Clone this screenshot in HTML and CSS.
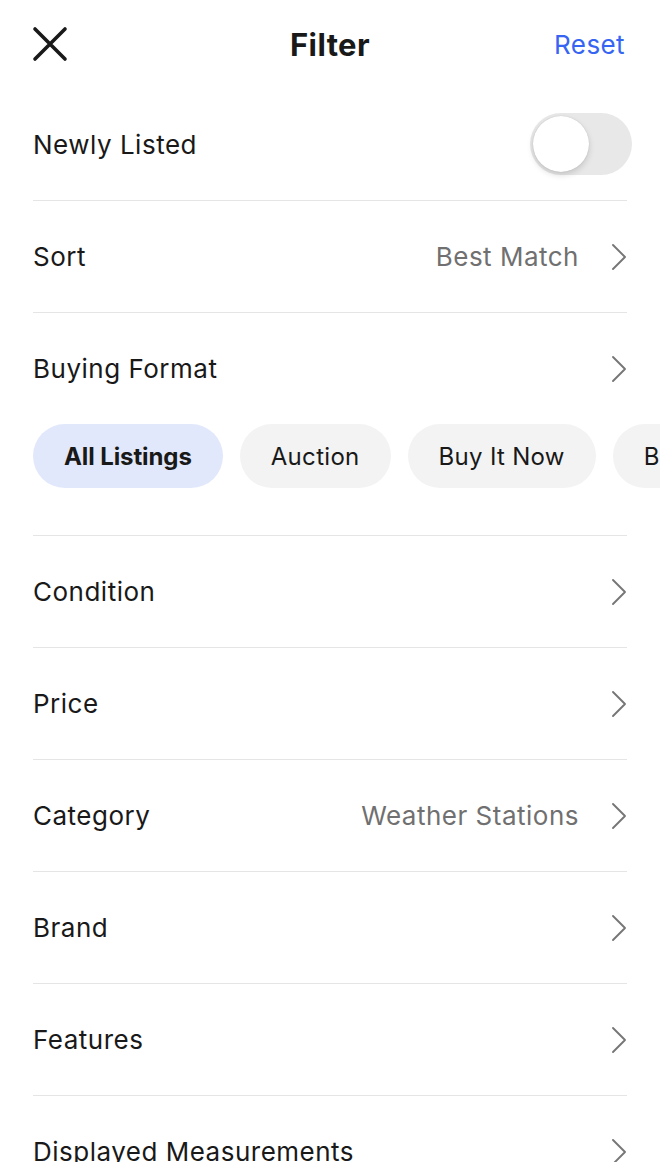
FILE: index.html
```html
<!DOCTYPE html>
<html>
<head>
<meta charset="utf-8">
<link rel="stylesheet" href="styles.css">
</head>
<body>
<div class="screen">
  <header class="top">
    <span class="close"><svg width="36" height="36" viewBox="0 0 36 36"><path d="M3 3 L33 33 M33 3 L3 33" stroke="#191919" stroke-width="3.6" stroke-linecap="round" fill="none"/></svg></span>
    <h1 class="title">Filter</h1>
    <span class="reset">Reset</span>
  </header>
  <div class="list">
    <div class="row">
      <span class="label">Newly Listed</span>
      <span class="toggle"><span class="knob"></span></span>
    </div>
    <div class="row sep">
      <span class="label">Sort</span>
      <span class="value">Best Match</span>
      <span class="chev"><svg width="16" height="28" viewBox="0 0 16 28"><path d="M2 2 L14 14 L2 26" stroke="#767676" stroke-width="1.9" fill="none" stroke-linecap="round" stroke-linejoin="round"/></svg></span>
    </div>
    <div class="group">
      <div class="row sep">
        <span class="label">Buying Format</span>
        <span class="chev"><svg width="16" height="28" viewBox="0 0 16 28"><path d="M2 2 L14 14 L2 26" stroke="#767676" stroke-width="1.9" fill="none" stroke-linecap="round" stroke-linejoin="round"/></svg></span>
      </div>
      <div class="chips">
        <span class="chip active">All Listings</span>
        <span class="chip">Auction</span>
        <span class="chip">Buy It Now</span>
        <span class="chip">Best Offer</span>
      </div>
    </div>
    <div class="row sep">
      <span class="label">Condition</span>
      <span class="chev"><svg width="16" height="28" viewBox="0 0 16 28"><path d="M2 2 L14 14 L2 26" stroke="#767676" stroke-width="1.9" fill="none" stroke-linecap="round" stroke-linejoin="round"/></svg></span>
    </div>
    <div class="row sep">
      <span class="label">Price</span>
      <span class="chev"><svg width="16" height="28" viewBox="0 0 16 28"><path d="M2 2 L14 14 L2 26" stroke="#767676" stroke-width="1.9" fill="none" stroke-linecap="round" stroke-linejoin="round"/></svg></span>
    </div>
    <div class="row sep">
      <span class="label">Category</span>
      <span class="value">Weather Stations</span>
      <span class="chev"><svg width="16" height="28" viewBox="0 0 16 28"><path d="M2 2 L14 14 L2 26" stroke="#767676" stroke-width="1.9" fill="none" stroke-linecap="round" stroke-linejoin="round"/></svg></span>
    </div>
    <div class="row sep">
      <span class="label">Brand</span>
      <span class="chev"><svg width="16" height="28" viewBox="0 0 16 28"><path d="M2 2 L14 14 L2 26" stroke="#767676" stroke-width="1.9" fill="none" stroke-linecap="round" stroke-linejoin="round"/></svg></span>
    </div>
    <div class="row sep">
      <span class="label">Features</span>
      <span class="chev"><svg width="16" height="28" viewBox="0 0 16 28"><path d="M2 2 L14 14 L2 26" stroke="#767676" stroke-width="1.9" fill="none" stroke-linecap="round" stroke-linejoin="round"/></svg></span>
    </div>
    <div class="row sep">
      <span class="label">Displayed Measurements</span>
      <span class="chev"><svg width="16" height="28" viewBox="0 0 16 28"><path d="M2 2 L14 14 L2 26" stroke="#767676" stroke-width="1.9" fill="none" stroke-linecap="round" stroke-linejoin="round"/></svg></span>
    </div>
  </div>
</div>
</body>
</html>
```
FILE: styles.css
```css
* { box-sizing: border-box; }
html, body { margin: 0; padding: 0; background: #fff; }
body {
  font-family: Inter, "Noto Sans", "Liberation Sans", sans-serif;
  color: #191919;
  width: 660px;
  height: 1162px;
  overflow: hidden;
}
.screen { width: 660px; overflow: hidden; }
.top {
  height: 88px;
  display: flex;
  align-items: center;
  justify-content: space-between;
  padding: 0 35px 0 32px;
  position: relative;
}
.close { display: flex; width: 36px; height: 36px; }
.title {
  position: absolute;
  left: 0; right: 0;
  text-align: center;
  margin: 0;
  font-size: 31px;
  font-weight: 700;
  letter-spacing: 0.4px;
  pointer-events: none;
}
.reset { color: #3665f3; font-size: 26px; letter-spacing: 0.4px; }
.list { padding-left: 33px; }
.row {
  height: 112px;
  display: flex;
  align-items: center;
  padding-right: 28px;
}
.sep { border-top: 1px solid #e5e5e5; margin-right: 33px; padding-right: 0; }
.label { font-size: 26px; flex: 1; letter-spacing: 0.5px; white-space: nowrap; }
.value { font-size: 26px; color: #707070; margin-right: 32px; letter-spacing: 0.5px; }
.chev { display: flex; width: 16px; }
.toggle {
  width: 102px;
  height: 62px;
  border-radius: 31px;
  background: #e8e8e8;
  display: flex;
  align-items: center;
  padding-left: 3px;
}
.knob {
  width: 56px;
  height: 56px;
  border-radius: 50%;
  background: #fff;
  box-shadow: 0 3px 6px rgba(0,0,0,0.15), 0 0 1px rgba(0,0,0,0.2);
}
.chips {
  display: flex;
  gap: 17px;
  height: 64px;
  margin-bottom: 47px;
  white-space: nowrap;
  overflow: hidden;
}
.chip {
  flex: none;
  height: 64px;
  border-radius: 32px;
  background: #f3f3f3;
  display: flex;
  align-items: center;
  padding: 0 31px;
  font-size: 24px;
  letter-spacing: 0.3px;
}
.chip.active { background: #e1e8fb; font-weight: 700; letter-spacing: -0.1px; }
```
